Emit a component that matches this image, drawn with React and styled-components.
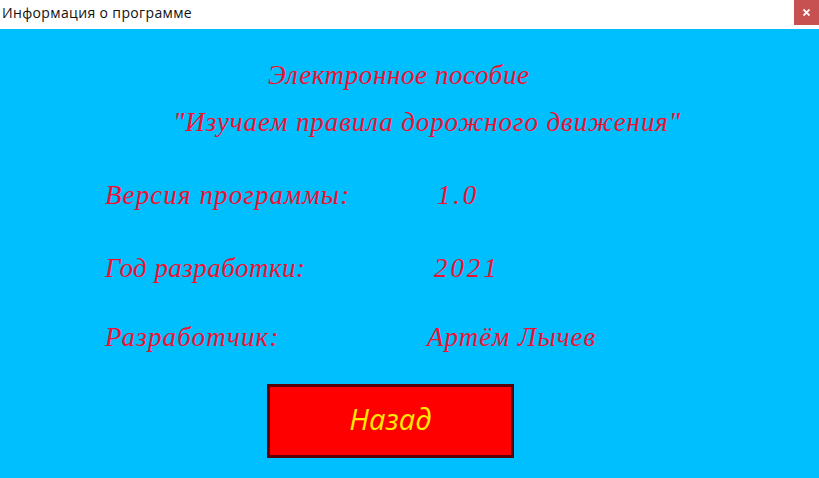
import React from "react";
import styled, { createGlobalStyle } from "styled-components";

const GlobalStyle = createGlobalStyle`
  html, body {
    margin: 0;
    padding: 0;
  }
`;

const Window = styled.div`
  width: 819px;
  height: 478px;
  display: flex;
  flex-direction: column;
  background-color: #00bfff;
  overflow: hidden;
`;

const TitleBar = styled.div`
  height: 29px;
  flex: none;
  display: flex;
  justify-content: space-between;
  align-items: flex-start;
  background-color: #fff;
`;

const TitleText = styled.span`
  padding: 3px 0 0 2px;
  font-family: "Open Sans", "Noto Sans", sans-serif;
  font-size: 14px;
  line-height: 19px;
  letter-spacing: 0.36px;
  color: #111;
`;

const CloseButton = styled.button`
  width: 25px;
  height: 25px;
  padding: 0;
  display: flex;
  justify-content: center;
  align-items: center;
  border: none;
  background-color: #c75050;
`;

const Content = styled.div`
  flex: 1;
  display: flex;
  flex-direction: column;
  padding-top: 29px;
`;

const Heading = styled.div`
  height: ${(p) => p.$height}px;
  padding-left: ${(p) => p.$left}px;
  font-family: "Liberation Serif", serif;
  font-style: italic;
  font-size: 27px;
  line-height: 34px;
  letter-spacing: ${(p) => p.$spacing}px;
  color: #f01030;
  white-space: nowrap;
`;

const InfoRow = styled.div`
  height: ${(p) => p.$height}px;
  display: grid;
  grid-template-columns: 105px ${(p) => p.$valueLeft - 105}px 1fr;
  font-family: "Liberation Serif", serif;
  font-style: italic;
  font-size: 27px;
  line-height: 34px;
  color: #f01030;
  white-space: nowrap;
`;

const Label = styled.span`
  grid-column: 2;
  letter-spacing: ${(p) => p.$spacing}px;
`;

const Value = styled.span`
  grid-column: 3;
  letter-spacing: ${(p) => p.$spacing}px;
`;

const BackButton = styled.button`
  width: 247px;
  height: 74px;
  margin: 17px 0 0 267px;
  padding: 0 0 5px;
  box-sizing: border-box;
  border: 3px solid #5c0008;
  background-color: #ff0000;
  font-family: "Open Sans", "Noto Sans", sans-serif;
  font-style: italic;
  font-size: 29px;
  font-weight: 500;
  letter-spacing: 0.2px;
  color: #ffea00;
`;

export default function App() {
  return (
    <Window>
      <GlobalStyle />
      <TitleBar>
        <TitleText>Информация о программе</TitleText>
        <CloseButton aria-label="Закрыть">
          <svg width="7" height="7" viewBox="0 0 7 7">
            <path d="M0.5 0.5L6.5 6.5M6.5 0.5L0.5 6.5" stroke="#fff" strokeWidth="1.8" />
          </svg>
        </CloseButton>
      </TitleBar>
      <Content>
        <Heading $left={268} $height={47} $spacing={0.6}>Электронное пособие</Heading>
        <Heading $left={173} $height={73} $spacing={0.9}>"Изучаем правила дорожного движения"</Heading>
        <InfoRow $height={73} $valueLeft={437}>
          <Label $spacing={1.1}>Версия программы:</Label>
          <Value $spacing={2.8}>1.0</Value>
        </InfoRow>
        <InfoRow $height={69} $valueLeft={434}>
          <Label $spacing={0.47}>Год разработки:</Label>
          <Value $spacing={2.9}>2021</Value>
        </InfoRow>
        <InfoRow $height={47} $valueLeft={427}>
          <Label $spacing={1.15}>Разработчик:</Label>
          <Value $spacing={1}>Артём Лычев</Value>
        </InfoRow>
        <BackButton>Назад</BackButton>
      </Content>
    </Window>
  );
}
